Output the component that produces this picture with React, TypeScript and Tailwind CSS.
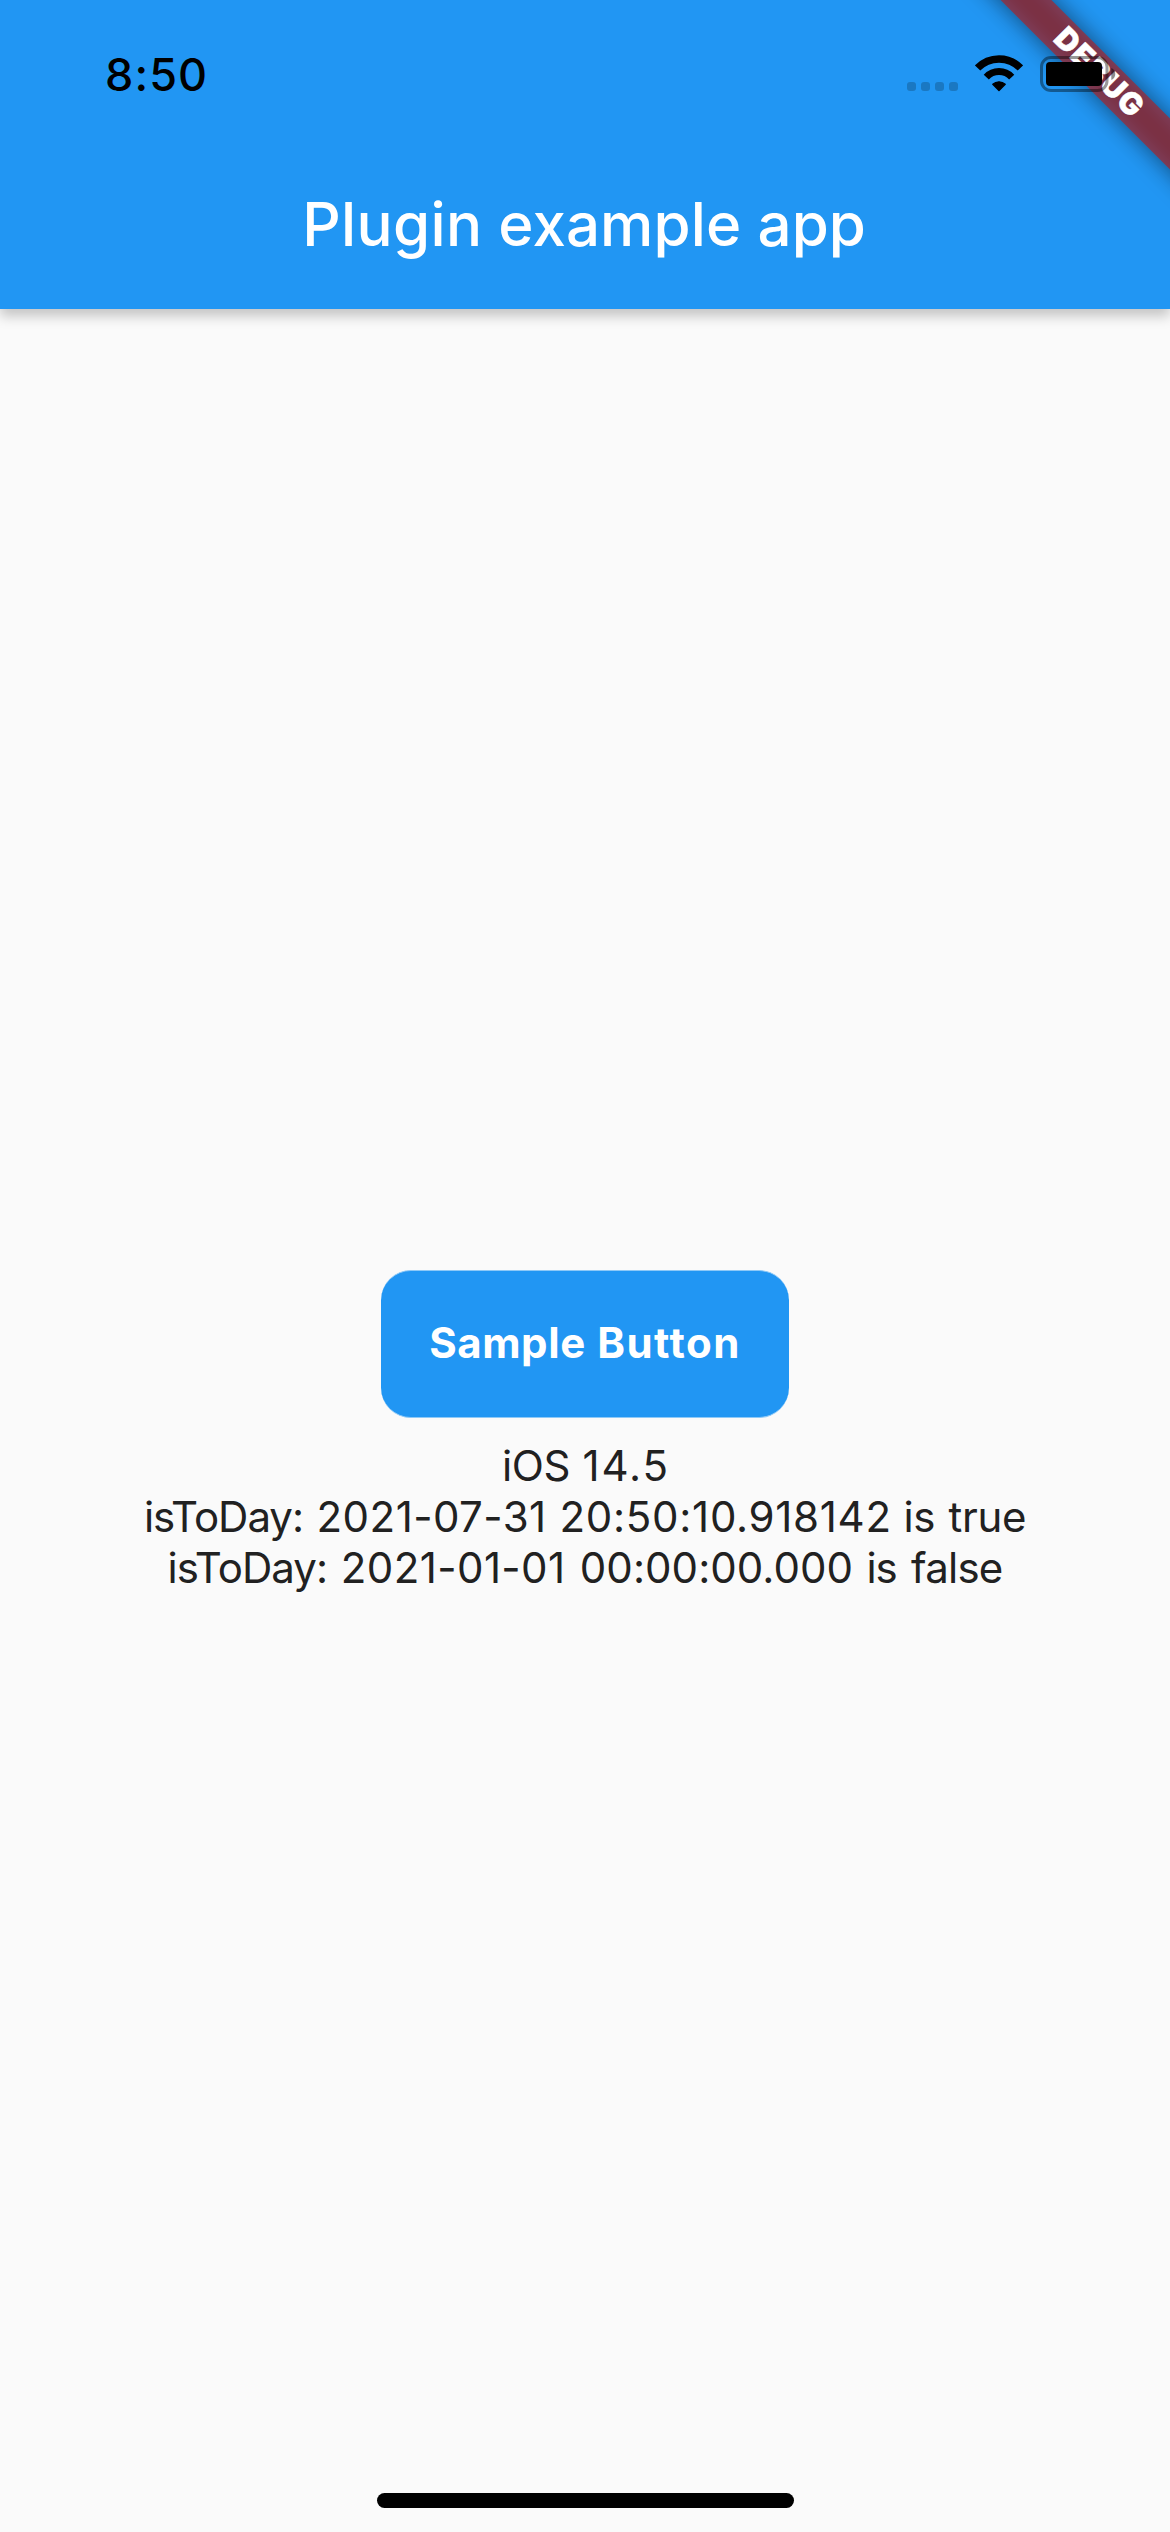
function StatusBar() {
  return (
    <div className="relative z-20 flex h-[141px] items-start justify-between pl-[105px] pr-[54px] text-black">
      <time className="mt-[47px] text-[45px] leading-[55px] font-[550] tracking-[1.1px]">8:50</time>
      <div className="mt-[55px] flex h-[37px] items-start">
        <div className="mt-[27px] mr-[17px] flex gap-[5px]">
          <span className="h-[9px] w-[9px] rounded-[3px] bg-black/20" />
          <span className="h-[9px] w-[9px] rounded-[3px] bg-black/20" />
          <span className="h-[9px] w-[9px] rounded-[3px] bg-black/20" />
          <span className="h-[9px] w-[9px] rounded-[3px] bg-black/20" />
        </div>
        <WifiIcon />
        <BatteryIcon />
      </div>
    </div>
  );
}

function WifiIcon() {
  return (
    <svg className="mr-[17px] h-[37px] w-[48px]" viewBox="0 0 48 37" fill="none">
      <path d="M2.6 13A29.8 29.8 0 0 1 45.4 13" stroke="#000" strokeWidth="7.4" />
      <path d="M11.3 22.1A17.3 17.3 0 0 1 36.7 22.1" stroke="#000" strokeWidth="7" />
      <path
        d="M17.8 29.2A9.4 9.4 0 0 1 30.2 29.2L24 35.4Z"
        fill="#000"
        stroke="#000"
        strokeWidth="1.4"
        strokeLinejoin="round"
      />
    </svg>
  );
}

function BatteryIcon() {
  return (
    <svg className="h-[38px] w-[76px]" viewBox="0 0 76 38" fill="none">
      <rect x="1.5" y="2.5" width="65.5" height="33" rx="9.5" stroke="#000" strokeOpacity="0.4" strokeWidth="3" />
      <path d="M71.3 13C74 14.2 75.3 16.4 75.3 19S74 23.8 71.3 25Z" fill="#000" fillOpacity="0.45" />
      <rect x="6" y="7" width="56" height="24" rx="4" fill="#000" />
    </svg>
  );
}

function DebugBanner() {
  return (
    <div className="absolute top-0 right-0 z-10 h-[300px] w-[300px] overflow-hidden">
      <div className="absolute top-[54px] left-[28px] h-[36px] w-[400px] rotate-45">
        <div className="absolute inset-0 bg-black/50 blur-[12px]" />
        <div className="absolute inset-0 flex items-center justify-center bg-[#b71c1c]/63">
          <span className="-mt-[3px] -mr-[3px] text-[30.6px] leading-[36px] font-black tracking-[1.3px] text-white [-webkit-text-stroke:0.5px_white]">
            DEBUG
          </span>
        </div>
      </div>
    </div>
  );
}

export default function App() {
  return (
    <div className="relative flex h-[2532px] w-[1170px] flex-col overflow-hidden bg-[#fafafa] font-['Inter',sans-serif]">
      <header className="h-[309px] shrink-0 bg-[#2196f3] shadow-[0_7px_12px_rgba(0,0,0,0.22)]">
        <StatusBar />
        <h1 className="mt-[47px] pr-[2px] text-center text-[60px] leading-[72px] font-medium whitespace-nowrap text-white">
          <span className="tracking-[0.35px]">Plugin</span>{" "}
          <span className="tracking-[0.11px]">example</span>{" "}
          <span className="ml-[0.3px]">app</span>
        </h1>
      </header>
      <DebugBanner />

      <main className="flex flex-1 flex-col items-center pt-[961px]">
        <button className="h-[148px] w-[408px] rounded-[30px] border-y border-[#8ec9f7] bg-[#2196f3] pb-[3px] text-[42px] leading-[51px] font-bold whitespace-nowrap text-white">
          <span className="tracking-[0.58px]">Sample</span>{" "}
          <span className="ml-[1.5px] tracking-[1.49px]">Button</span>
        </button>
        <div className="mt-[22px] text-center text-[42px] leading-[51px] whitespace-nowrap text-[#212121]">
          <p className="pl-[2px]">
            <span className="tracking-[-0.48px]">iOS</span>{" "}
            <span className="ml-[0.7px] tracking-[1.91px]">14.5</span>
          </p>
          <p>
            <span className="tracking-[-1.01px]">isToDay:</span>{" "}
            <span className="ml-[1.7px] tracking-[0.46px]">2021-07-31</span>{" "}
            <span className="ml-[1.1px] tracking-[0.71px]">20:50:10.918142</span>{" "}
            <span className="tracking-[-0.55px]">is</span>{" "}
            <span className="ml-[1.9px] tracking-[-0.32px]">true</span>
          </p>
          <p>
            <span className="tracking-[-0.95px]">isToDay:</span>{" "}
            <span className="ml-[1.9px] tracking-[0.41px]">2021-01-01</span>{" "}
            <span className="ml-[2.5px] tracking-[0.05px]">00:00:00.000</span>{" "}
            <span className="ml-[1.6px] tracking-[-1.15px]">is</span>{" "}
            <span className="ml-[2.8px] tracking-[-0.77px]">false</span>
          </p>
        </div>
      </main>

      <div className="mb-[24px] ml-[377px] h-[15px] w-[417px] shrink-0 rounded-full bg-black" />
    </div>
  );
}
